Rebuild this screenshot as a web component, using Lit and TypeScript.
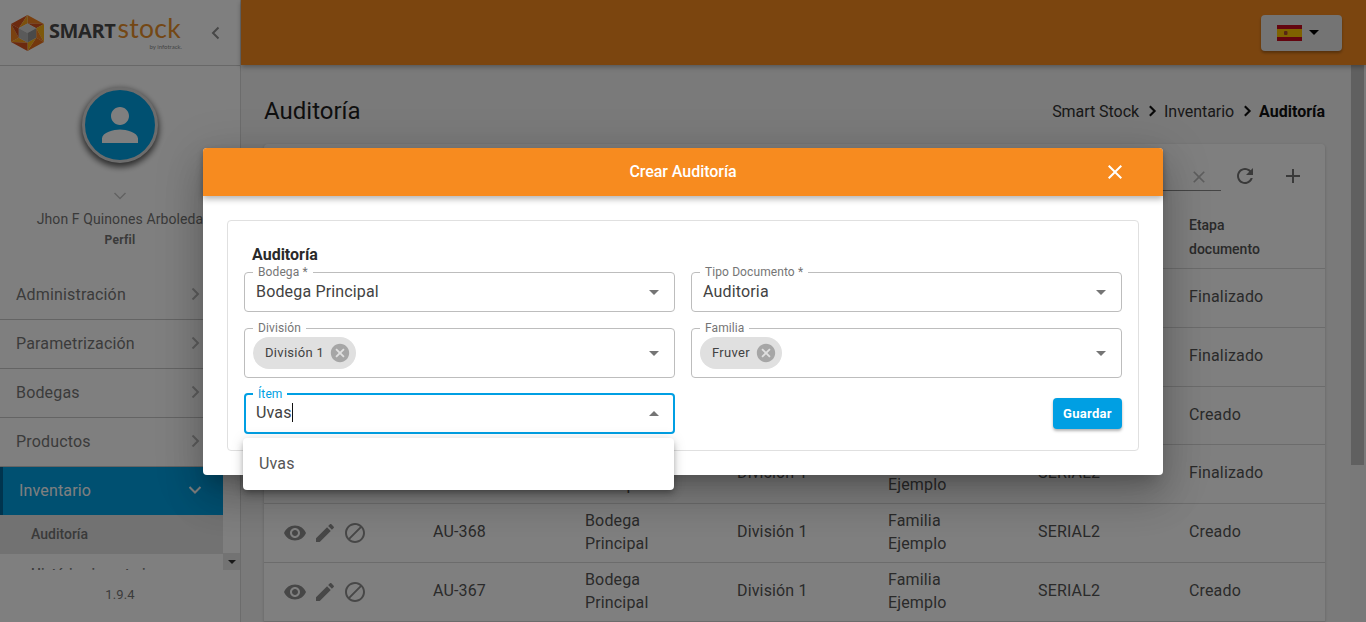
import { LitElement, html, css, svg } from "lit";
import { customElement } from "lit/decorators.js";

const P = {
  eye: "M12 4.5C7 4.5 2.73 7.61 1 12c1.73 4.39 6 7.5 11 7.5s9.27-3.11 11-7.5c-1.73-4.39-6-7.5-11-7.5zM12 17c-2.76 0-5-2.24-5-5s2.24-5 5-5 5 2.24 5 5-2.24 5-5 5zm0-8c-1.66 0-3 1.34-3 3s1.34 3 3 3 3-1.34 3-3-1.34-3-3-3z",
  edit: "M3 17.25V21h3.75L17.81 9.94l-3.75-3.75L3 17.25zM20.71 7.04c.39-.39.39-1.02 0-1.41l-2.34-2.34c-.39-.39-1.02-.39-1.41 0l-1.83 1.83 3.75 3.75 1.83-1.83z",
  block: "M12 2C6.48 2 2 6.48 2 12s4.48 10 10 10 10-4.48 10-10S17.52 2 12 2zM4 12c0-4.42 3.58-8 8-8 1.85 0 3.55.63 4.9 1.69L5.69 16.9C4.63 15.55 4 13.85 4 12zm8 8c-1.85 0-3.55-.63-4.9-1.69L18.31 7.1C19.37 8.45 20 10.15 20 12c0 4.42-3.58 8-8 8z",
  close: "M19 6.41L17.59 5 12 10.59 6.41 5 5 6.41 10.59 12 5 17.59 6.41 19 12 13.41 17.59 19 19 17.59 13.41 12z",
  refresh: "M17.65 6.35C16.2 4.9 14.21 4 12 4c-4.42 0-7.99 3.58-7.99 8s3.57 8 7.99 8c3.73 0 6.84-2.55 7.73-6h-2.08c-.82 2.33-3.04 4-5.65 4-3.31 0-6-2.69-6-6s2.69-6 6-6c1.66 0 3.14.69 4.22 1.78L13 11h7V4l-2.35 2.35z",
  add: "M19 13h-6v6h-2v-6H5v-2h6V5h2v6h6v2z",
  cancel: "M12 2C6.47 2 2 6.47 2 12s4.47 10 10 10 10-4.47 10-10S17.53 2 12 2zm5 13.59L15.59 17 12 13.41 8.41 17 7 15.59 10.59 12 7 8.41 8.41 7 12 10.59 15.59 7 17 8.41 13.41 12 17 15.59z",
  person: "M12 12c2.21 0 4-1.79 4-4s-1.79-4-4-4-4 1.79-4 4 1.79 4 4 4zm0 2c-2.67 0-8 1.34-8 4v2h16v-2c0-2.66-5.33-4-8-4z",
  down: "M7 10l5 5 5-5z",
  up: "M7 14l5-5 5 5z",
};
const icon = (d: string, cls = "ic") => html`<svg class=${cls} viewBox="0 0 24 24" aria-hidden="true"><path d=${d}></path></svg>`;
const chev = (d: string, cls: string) => html`<svg class=${cls} viewBox="0 0 16 16" aria-hidden="true"><path d=${d}></path></svg>`;

const RIGHT = "M5.5 2.5 11 8l-5.500 5.500";
const DOWN = "M2.500 5 8 10.500 13.500 5";
const LEFT = "M10.500 2.500 5 8l5.500 5.500";

function logo() {
  const cx = 18, cy = 18, R = 18, r = 9.500;
  const pt = (rad: number, i: number) => {
    const a = (-90 + 60 * i) * Math.PI / 180;
    return [cx + rad * Math.cos(a), cy + rad * Math.sin(a)];
  };
  const colors = ["#f58220", "#d9541e", "#fbb316", "#f58220", "#e8701a", "#fbb316", "#d9541e", "#f9a01b", "#f58220", "#c8481a", "#d9541e", "#f9a01b"];
  const tris: unknown[] = [];
  for (let i = 0; i < 6; i++) {
    const a = pt(R, i), b = pt(R, i + 1), c = pt(r, i + 1), d = pt(r, i);
    tris.push(svg`<polygon points="${a} ${b} ${d}" fill=${colors[i * 2]}></polygon>`);
    tris.push(svg`<polygon points="${b} ${c} ${d}" fill=${colors[i * 2 + 1]}></polygon>`);
  }
  const o = [cx, cy];
  return html`<svg class="hex" viewBox="2.4 0 31.2 36" preserveAspectRatio="none" aria-hidden="true">
    ${tris}
    ${svg`<polygon points="${pt(r, 5)} ${pt(r, 0)} ${pt(r, 1)} ${o}" fill="#d6d6d6"></polygon>
    <polygon points="${pt(r, 5)} ${o} ${pt(r, 3)} ${pt(r, 4)}" fill="#b4b4b4"></polygon>
    <polygon points="${o} ${pt(r, 1)} ${pt(r, 2)} ${pt(r, 3)}" fill="#949494"></polygon>`}
  </svg>`;
}

const rows = [
  ["AU-372", "Finalizado"],
  ["AU-371", "Finalizado"],
  ["AU-370", "Creado"],
  ["AU-369", "Finalizado"],
  ["AU-368", "Creado"],
  ["AU-367", "Creado"],
];

@customElement("app-root")
export class AppRoot extends LitElement {
  static styles = css`
    :host { display: block; position: relative; width: 1366px; height: 622px; overflow: hidden; font-family: Roboto, "Liberation Sans", sans-serif; background: #f4f4f4; }
    * { box-sizing: border-box; }
    .layout { display: flex; height: 622px; }

    .side { width: 241px; flex: none; display: flex; flex-direction: column; background: #fff; border-right: 1px solid #d8d8d8; }
    .brand { height: 66px; flex: none; display: flex; align-items: center; padding: 0 16px 0 11px; border-bottom: 1px solid #d0d0d0; }
    .hex { width: 33px; height: 36px; flex: none; margin-top: 1px; }
    .word { margin-left: 5px; display: flex; flex-direction: column; width: 134px; padding-top: 1px; }
    .word-main { line-height: 24px; white-space: nowrap; }
    .smart { font-family: "Open Sans", sans-serif; font-weight: 700; color: #4a4a4a; font-size: 20px; letter-spacing: -0.400px; }
    .stock { font-family: Lato, sans-serif; color: #e88f2a; font-size: 26.500px; margin-left: 2px; letter-spacing: .3px; }
    .by { font-family: Lato, sans-serif; font-size: 6px; line-height: 6px; color: #8a8a8a; text-align: right; padding-right: 1px; margin-top: -1px; }
    .collapse { width: 16px; height: 16px; margin-left: auto; fill: none; stroke: #8f8f8f; stroke-width: 2; }

    .profile { height: 205px; flex: none; display: flex; flex-direction: column; align-items: center; padding-top: 21px; }
    .avatar { width: 76px; height: 76px; border-radius: 50%; background: #00a0e3; border: 3px solid #d8d8d8; box-shadow: 0 3px 6px 1px rgba(0,0,0,.65); display: flex; align-items: center; justify-content: center; }
    .avatar svg { width: 54px; height: 54px; fill: #fff; }
    .pchev { width: 16px; height: 16px; margin-top: 25px; fill: none; stroke: #c4c4c4; stroke-width: 1.500; }
    .name { margin-top: 5px; font-size: 14px; line-height: 20px; letter-spacing: .1px; color: #757575; white-space: nowrap; }
    .perfil { font-size: 12px; line-height: 18px; margin-top: 2px; font-weight: 700; letter-spacing: .3px; color: #757575; }

    .navwrap { height: 299px; flex: none; display: flex; overflow: hidden; }
    .nav { width: 223px; flex: none; overflow: hidden; }
    .item { height: 49px; display: flex; align-items: center; padding: 0 20px 2px 16px; font-size: 16px; letter-spacing: .16px; color: #777; border-bottom: 1px solid #c8c8c8; }
    .item svg { width: 16px; height: 16px; margin-left: auto; fill: none; stroke: #bbb; stroke-width: 2; }
    .item.active { height: 48px; padding-left: 16px; background: #00a0e3; color: #fff; border-bottom: 0; border-left: 3px solid #00689c; }
    .item.active svg { stroke: #fff; }
    .sub { height: 39px; display: flex; align-items: center; padding-left: 31px; font-size: 14px; font-weight: 500; color: #757575; }
    .sub.on { background: #e4e4e4; padding-bottom: 2px; }
    .navbar { width: 17px; flex: none; display: flex; flex-direction: column; justify-content: flex-end; }
    .navarrow { height: 17px; background: #e6e6e6; display: flex; align-items: center; justify-content: center; }
    .navarrow i { border-left: 4px solid transparent; border-right: 4px solid transparent; border-top: 4px solid #333; }
    .version { flex: 1; display: flex; align-items: center; justify-content: center; font-size: 13px; letter-spacing: .1px; color: #777; padding-bottom: 4px; }

    .main { flex: 1; min-width: 0; display: flex; flex-direction: column; }
    .top { height: 65px; flex: none; background: #f78b1f; display: flex; align-items: center; justify-content: flex-end; padding: 0 24px 0 0; box-shadow: 0 2px 5px rgba(0,0,0,.3); position: relative; z-index: 1; }
    .lang { width: 81px; height: 36px; border-radius: 4px; background: #e8e8e8; box-shadow: 0 2px 3px rgba(0,0,0,.3); display: flex; align-items: center; padding-left: 16px; }
    .flag { width: 25px; height: 16px; display: block; }
    .caret { margin-left: 7px; border-left: 5px solid transparent; border-right: 5px solid transparent; border-top: 5px solid #000; }

    .bodyrow { flex: 1; min-height: 0; display: flex; }
    .content { width: 1109px; flex: none; padding: 13px 25px 0 23px; }
    .sbar { flex: 1; background: #f3f3f3; padding-left: 1px; }
    .thumb { width: 13px; height: 400px; background: #c1c1c1; }

    .head { height: 66px; display: flex; align-items: center; justify-content: space-between; }
    h1 { margin: 0; font-size: 24px; font-weight: 400; color: #1f1f1f; }
    .crumb { display: flex; align-items: center; font-size: 16px; letter-spacing: -.05px; color: #333; }
    .crumb svg { width: 14px; height: 14px; margin: 0 5.500px; fill: none; stroke: #111; stroke-width: 2.400; }
    .crumb b { font-weight: 700; color: #111; letter-spacing: 0; }

    .card { background: #fff; border-radius: 4px; box-shadow: 0 1px 3px rgba(0,0,0,.2); height: 480px; }
    .tools { height: 64px; display: flex; align-items: center; justify-content: flex-end; padding-right: 8px; }
    .search { width: 220px; height: 28px; margin-top: 2px; border-bottom: 1px solid #8a8a8a; display: flex; justify-content: flex-end; align-items: center; padding-right: 12px; }
    .search svg { width: 20px; height: 20px; fill: #bcbcbc; }
    .tbtn { width: 48px; height: 24px; display: flex; justify-content: center; }
    .tbtn svg { width: 24px; height: 24px; fill: #757575; }
    .grid { display: grid; grid-template-columns: 169px 152px 152px 151px 150px 151px 136px; }
    .hrow { height: 61px; padding-bottom: 3px; align-items: center; font-size: 14px; font-weight: 500; line-height: 24px; color: #555; border-bottom: 1px solid #d8d8d8; }
    .row { height: 58.830px; padding-bottom: 3px; align-items: center; font-size: 16px; line-height: 23px; letter-spacing: .15px; color: #555; border-bottom: 1px solid #d8d8d8; }
    .acts { display: flex; gap: 6px; padding-left: 19px; }
    .acts svg { width: 24px; height: 24px; fill: #8f8f8f; margin-top: 2px; }
    .hrow > div:first-child { padding-left: 20px; }

    .overlay { position: absolute; inset: 0; z-index: 5; background: rgba(0,0,0,.5); display: flex; justify-content: center; align-items: flex-start; padding-top: 148px; }
    .dlg { width: 960px; height: 327px; background: #fff; border-radius: 4px; box-shadow: 0 11px 15px -7px rgba(0,0,0,.2), 0 24px 38px 3px rgba(0,0,0,.14), 0 9px 46px 8px rgba(0,0,0,.12); }
    .dlghead { height: 48px; padding-bottom: 2px; background: #f78b1f; border-radius: 4px 4px 0 0; display: flex; align-items: center; justify-content: center; position: relative; color: #fff; font-size: 16px; font-weight: 500; letter-spacing: -.05px; box-shadow: 0 3px 6px rgba(0,0,0,.3); }
    .x { position: absolute; right: 36px; top: 12px; width: 24px; height: 24px; fill: #fff; }
    .dlgbody { padding: 24px; }
    .box { height: 231px; border: 1px solid #e0e0e0; border-radius: 4px; padding: 24px 16px 16px; }
    .boxtitle { font-size: 16px; font-weight: 700; line-height: 20px; color: #2a2a2a; padding-left: 8px; margin-bottom: 7px; }
    .form { display: grid; grid-template-columns: 431px 431px; column-gap: 16px; row-gap: 16px; }
    .field { position: relative; height: 40px; border: 1px solid #bdbdbd; border-radius: 4px; display: flex; align-items: center; padding: 0 8px 0 11px; font-size: 16px; letter-spacing: .16px; color: #424242; }
    .field > span:not(.chip):not(.lbl) { margin-bottom: 2px; }
    .field.tall { height: 50px; padding-left: 8px; }
    .field.focus { height: 41px; border: 2px solid #009fe3; padding: 0 7px 0 10px; margin-top: -1px; }
    .lbl { position: absolute; left: 8px; top: -8px; background: #fff; padding: 0 5px; font-size: 12px; line-height: 14px; letter-spacing: .1px; color: #757575; }
    .focus .lbl { color: #009fe3; left: 7px; top: -8px; }
    .cursor { border-right: 1px solid #111; height: 19px; line-height: 19px; }
    .arr { width: 24px; height: 24px; fill: #757575; margin-left: auto; flex: none; }
    .chip { height: 32px; margin-bottom: 1px; border-radius: 16px; background: #e0e0e0; display: flex; align-items: center; padding: 0 5px 0 12px; font-size: 13px; letter-spacing: .3px; color: #424242; }
    .chip svg { width: 22px; height: 22px; margin-left: 5px; fill: #a6a6a6; }
    .action { display: flex; justify-content: flex-end; align-items: center; padding-bottom: 2px; }
    .save { width: 69px; height: 31px; border: 0; border-radius: 4px; background: #009fe3; color: #fff; font: 700 13px Roboto, sans-serif; letter-spacing: .3px; box-shadow: 0 2px 3px rgba(0,0,0,.3); }
    .menu { position: absolute; left: -3px; top: 43px; width: 431px; height: 52px; background: #fff; border-radius: 4px; box-shadow: 0 3px 5px -1px rgba(0,0,0,.2), 0 5px 8px rgba(0,0,0,.14), 0 1px 14px rgba(0,0,0,.12); display: flex; align-items: center; padding: 0 0 2px 16px; color: #555; }
  `;

  private select(label: string, value: string) {
    return html`<div class="field"><span class="lbl">${label}</span><span>${value}</span>${icon(P.down, "arr")}</div>`;
  }
  private chips(label: string, value: string) {
    return html`<div class="field tall"><span class="lbl">${label}</span><span class="chip">${value}${icon(P.cancel, "")}</span>${icon(P.down, "arr")}</div>`;
  }

  render() {
    return html`
      <div class="layout">
        <aside class="side">
          <div class="brand">
            ${logo()}
            <div class="word">
              <div class="word-main"><span class="smart">SMART</span><span class="stock">stock</span></div>
              <div class="by">by infotrack.</div>
            </div>
            ${chev(LEFT, "collapse")}
          </div>
          <div class="profile">
            <div class="avatar">${icon(P.person, "")}</div>
            ${chev(DOWN, "pchev")}
            <div class="name">Jhon F Quinones Arboleda</div>
            <div class="perfil">Perfil</div>
          </div>
          <div class="navwrap">
            <nav class="nav">
              ${["Administración", "Parametrización", "Bodegas", "Productos"].map((t) => html`<div class="item">${t}${chev(RIGHT, "")}</div>`)}
              <div class="item active">Inventario${chev(DOWN, "")}</div>
              <div class="sub on">Auditoría</div>
              <div class="sub">Histórico inventario</div>
            </nav>
            <div class="navbar"><div class="navarrow"><i></i></div></div>
          </div>
          <div class="version">1.9.4</div>
        </aside>
        <div class="main">
          <header class="top">
            <div class="lang">
              <svg class="flag" viewBox="0 0 25 16" aria-hidden="true">
                <rect width="25" height="16" fill="#c60b1e"></rect>
                <rect y="4" width="25" height="8" fill="#ffc400"></rect>
                <rect x="7" y="6" width="3.500" height="4" rx="1" fill="#ad4a2a"></rect>
              </svg>
              <span class="caret"></span>
            </div>
          </header>
          <div class="bodyrow">
            <div class="content">
              <div class="head">
                <h1>Auditoría</h1>
                <div class="crumb">Smart Stock${chev(RIGHT, "")}Inventario${chev(RIGHT, "")}<b>Auditoría</b></div>
              </div>
              <section class="card">
                <div class="tools">
                  <div class="search">${icon(P.close, "")}</div>
                  <div class="tbtn">${icon(P.refresh, "")}</div>
                  <div class="tbtn">${icon(P.add, "")}</div>
                </div>
                <div class="grid hrow">
                  <div>Acciones</div><div>Código</div><div>Bodega</div><div>División</div><div>Familia</div><div>Serial</div><div>Etapa<br />documento</div>
                </div>
                ${rows.map((r) => html`
                  <div class="grid row">
                    <div class="acts">${icon(P.eye, "")}${icon(P.edit, "")}${icon(P.block, "")}</div>
                    <div>${r[0]}</div>
                    <div>Bodega<br />Principal</div>
                    <div>División 1</div>
                    <div>Familia<br />Ejemplo</div>
                    <div>SERIAL2</div>
                    <div>${r[1]}</div>
                  </div>`)}
              </section>
            </div>
            <div class="sbar"><div class="thumb"></div></div>
          </div>
        </div>
      </div>
      <div class="overlay">
        <div class="dlg" role="dialog">
          <div class="dlghead">Crear Auditoría${icon(P.close, "x")}</div>
          <div class="dlgbody">
            <div class="box">
              <div class="boxtitle">Auditoría</div>
              <div class="form">
                ${this.select("Bodega *", "Bodega Principal")}
                ${this.select("Tipo Documento *", "Auditoria")}
                ${this.chips("División", "División 1")}
                ${this.chips("Familia", "Fruver")}
                <div class="field focus">
                  <span class="lbl">Ítem</span><span class="cursor">Uvas</span>${icon(P.up, "arr")}
                  <div class="menu">Uvas</div>
                </div>
                <div class="action"><button class="save">Guardar</button></div>
              </div>
            </div>
          </div>
        </div>
      </div>
    `;
  }
}
